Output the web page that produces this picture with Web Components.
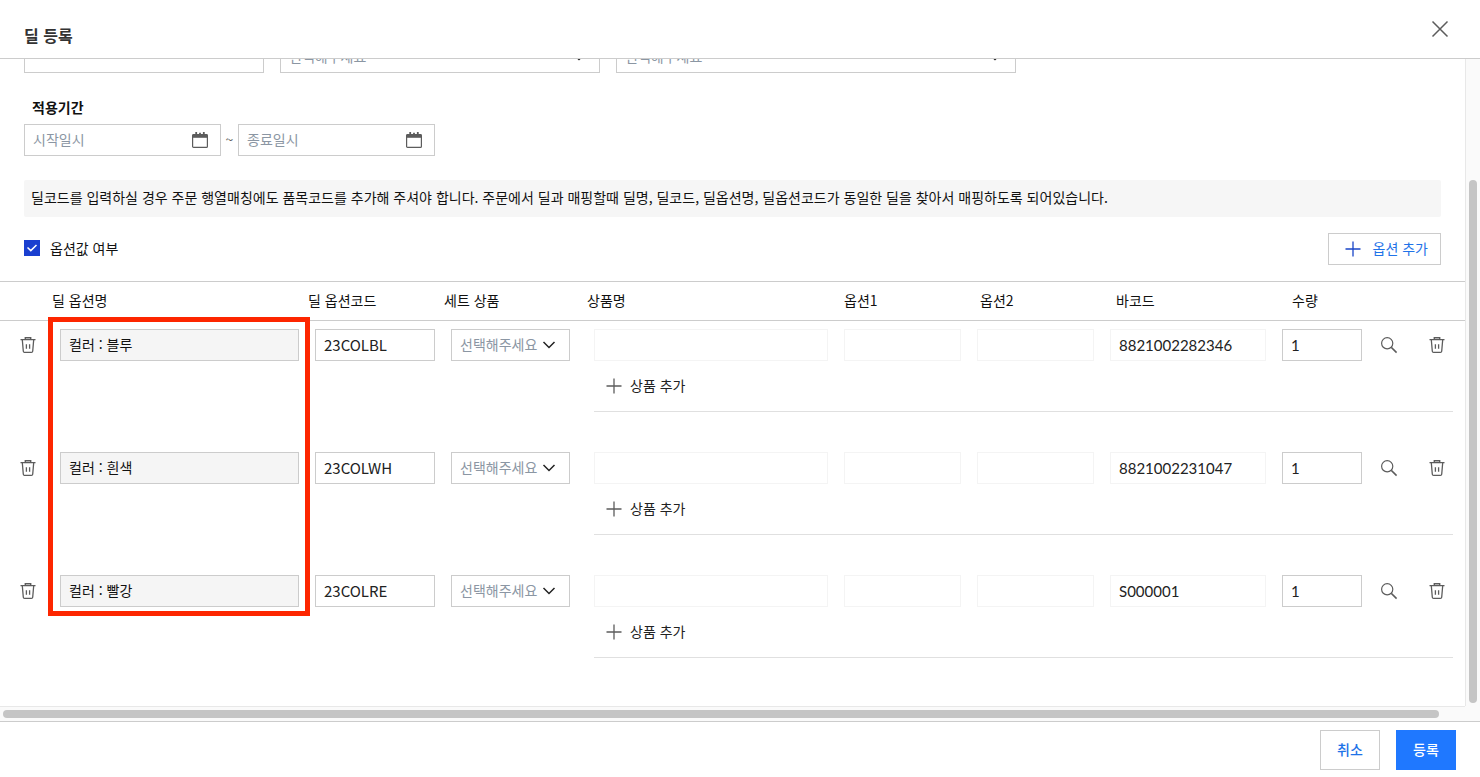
<!DOCTYPE html>
<html lang="ko">
<head>
<meta charset="utf-8">
<meta name="viewport" content="width=device-width, initial-scale=1">
<title>딜 등록</title>
<style>
    html, body {
        height: 100%;
        margin: 0;
    }
    body {
        font: 14px/20px "Noto Sans CJK KR", sans-serif;
        color: #111;
        background: #fff;
    }
</style>
</head>
<body>
<deal-dialog heading="딜 등록">
    <deal-form></deal-form>
    <deal-button slot="actions">취소</deal-button>
    <deal-button slot="actions" variant="primary">등록</deal-button>
</deal-dialog>

<script>
const ICONS = {
    close: '<path d="M0.5 0.5 15.5 15.5M15.5 0.5 0.5 15.5" stroke-width="1.5"/>',
    plus: '<path d="M8 0.5V15.5M0.5 8H15.5" stroke-width="1.3"/>',
    chevron: '<path d="M2.5 5 8 10.5 13.5 5" stroke-width="1.5"/>',
    check: '<path d="M3.5 7.5 6.8 10.6 12.5 5" stroke-width="1.5"/>',
    search: '<circle cx="6.2" cy="6.3" r="5.6" stroke-width="1.2"/><path d="M10.3 10.4 15.6 15.6" stroke-width="1.5"/>',
    trash: '<path d="M0.5 2.6H15.5M5.3 2.4V0.7H10.7V2.4" stroke-width="1.4"/><path d="M2.3 2.8 3.3 14.2Q3.4 15.4 4.6 15.4H11.4Q12.6 15.4 12.7 14.2L13.7 2.8M6.4 7.3V11.8M9.6 7.3V11.8" stroke-width="1.3"/>',
    calendar: '<rect x="0.6" y="2.6" width="14.8" height="12.8" rx="1" stroke-width="1.2"/><path d="M0.6 2.2H15.4V5.8H0.6Z" fill="currentColor" stroke="none"/><path d="M4.2 0V3M8 0.8V3M11.8 0V3" stroke-width="1.8"/>'
};

class DealIcon extends HTMLElement {
    constructor() {
        super();
        this.attachShadow({ mode: 'open' });
    }

    connectedCallback() {
        this.shadowRoot.innerHTML = `
            <style>
                :host { display: block; flex: none; width: 16px; height: 16px; }
                svg { display: block; width: 100%; height: 100%; overflow: visible; }
            </style>
            <svg viewBox="0 0 16 16" fill="none" stroke="currentColor" aria-hidden="true">
                ${ICONS[this.getAttribute('name')] || ''}
            </svg>
        `;
    }
}

class DealButton extends HTMLElement {
    constructor() {
        super();
        this.attachShadow({ mode: 'open' });
        this.shadowRoot.innerHTML = `
            <style>
                :host { display: block; }
                button {
                    height: 40px;
                    min-width: 60px;
                    padding: 0 16px 2px;
                    border: 1px solid #ccc;
                    background: #fff;
                    color: #1f73e8;
                    font: inherit;
                    font-weight: 500;
                    cursor: pointer;
                }
                :host([variant=primary]) button {
                    border-color: #1f78ff;
                    background: #1f78ff;
                    color: #fff;
                }
            </style>
            <button type="button"><slot></slot></button>
        `;
    }
}

class TextField extends HTMLElement {
    constructor() {
        super();
        this.attachShadow({ mode: 'open' });
    }

    connectedCallback() {
        this.shadowRoot.innerHTML = `
            <style>
                :host { display: block; }
                input {
                    display: block;
                    box-sizing: border-box;
                    width: 100%;
                    height: 32px;
                    padding: 0 8px 2px;
                    border: 1px solid #ccc;
                    border-radius: 0;
                    background: #fff;
                    color: #222;
                    font: inherit;
                }
                :host([kind=code]) input { font-size: 15px; }
                :host([kind=number]) input { padding-bottom: 0; font: 15px/20px Lato, sans-serif; }
                :host([kind=locked]) input { background: #f5f5f5; color: #111; }
                :host([quiet]) input { border-color: #f4f4f4; }
            </style>
            <input type="text">
        `;
        const input = this.shadowRoot.querySelector('input');
        input.value = this.getAttribute('value') || '';
        input.setAttribute('aria-label', this.getAttribute('label'));
        input.readOnly = this.hasAttribute('quiet') || this.getAttribute('kind') === 'locked';
    }
}

class SelectField extends HTMLElement {
    constructor() {
        super();
        this.attachShadow({ mode: 'open' });
    }

    connectedCallback() {
        this.shadowRoot.innerHTML = `
            <style>
                :host { display: grid; align-items: center; }
                select, deal-icon { grid-area: 1 / 1; }
                select {
                    appearance: none;
                    box-sizing: border-box;
                    width: 100%;
                    height: 32px;
                    padding: 0 28px 2px 8px;
                    border: 1px solid #ccc;
                    border-radius: 0;
                    background: #fff;
                    color: #8b96a3;
                    font: inherit;
                }
                deal-icon {
                    justify-self: end;
                    margin-right: 13px;
                    color: #222;
                    pointer-events: none;
                }
            </style>
            <select><option>선택해주세요</option></select>
            <deal-icon name="chevron"></deal-icon>
        `;
        this.shadowRoot.querySelector('select').setAttribute('aria-label', this.getAttribute('label'));
    }
}

class DateField extends HTMLElement {
    constructor() {
        super();
        this.attachShadow({ mode: 'open' });
    }

    connectedCallback() {
        const label = this.getAttribute('label');
        this.shadowRoot.innerHTML = `
            <style>
                :host {
                    display: flex;
                    align-items: center;
                    box-sizing: border-box;
                    width: 197px;
                    height: 32px;
                    padding: 0 12px 0 8px;
                    border: 1px solid #ccc;
                }
                input {
                    flex: 1;
                    min-width: 0;
                    padding: 0 0 2px;
                    border: 0;
                    outline: 0;
                    background: none;
                    font: inherit;
                }
                input::placeholder { color: #8b96a3; opacity: 1; }
                deal-icon { color: #5c5c5c; }
            </style>
            <input type="text" placeholder="${label}" aria-label="${label}">
            <deal-icon name="calendar"></deal-icon>
        `;
    }
}

class OptionTable extends HTMLElement {
    constructor() {
        super();
        this.attachShadow({ mode: 'open' });
        this.options = [
            { name: '컬러 : 블루', code: '23COLBL', barcode: '8821002282346' },
            { name: '컬러 : 흰색', code: '23COLWH', barcode: '8821002231047' },
            { name: '컬러 : 빨강', code: '23COLRE', barcode: 'S000001' }
        ];
    }

    connectedCallback() {
        this.shadowRoot.innerHTML = `
            <style>
                :host { display: block; position: relative; }
                table {
                    width: 100%;
                    table-layout: fixed;
                    border-collapse: separate;
                    border-spacing: 0;
                }
                .w-delete, .w-end { width: 52px; }
                .w-name { width: 256px; }
                .w-code { width: 136px; }
                .w-set { width: 143px; }
                .w-option { width: 133px; }
                .w-barcode { width: 172px; }
                .w-count { width: 83px; }
                .w-search { width: 48px; }
                th {
                    height: 36px;
                    padding: 0 0 2px;
                    border-top: 1px solid #ccc;
                    border-bottom: 1px solid #ccc;
                    font-weight: 400;
                    text-align: left;
                    white-space: nowrap;
                }
                th.second { padding-left: 3px; }
                th.barcode { padding-left: 6px; }
                th.count { padding-left: 10px; }
                td { padding: 8px 16px 0 0; vertical-align: top; }
                td.name { padding: 8px 9px 0 8px; }
                td.code { padding: 8px 9px 0 7px; }
                td.set { padding: 8px 17px 0 7px; }
                td.product { padding-left: 7px; }
                td.count { padding-right: 3px; }
                td.icon { padding: 8px 0 0; }
                td.more { padding: 0 12px 32px 7px; }
                .icon button {
                    display: flex;
                    align-items: center;
                    justify-content: center;
                    width: 32px;
                    height: 32px;
                    margin: 0 8px;
                    padding: 0;
                    border: 0;
                    background: none;
                    color: #5c5c5c;
                    cursor: pointer;
                }
                .icon.delete button { margin: 0 12px; }
                .line { height: 50px; border-bottom: 1px solid #e0e0e0; }
                .line button {
                    display: flex;
                    align-items: center;
                    gap: 8px;
                    height: 50px;
                    padding: 0 12px;
                    border: 0;
                    background: none;
                    color: #222;
                    font: inherit;
                    cursor: pointer;
                }
                .line span { padding-bottom: 2px; }
                .line deal-icon { color: #5c5c5c; }
                /* callout drawn over the option name column */
                .callout {
                    position: absolute;
                    box-sizing: border-box;
                    top: 36px;
                    left: 48px;
                    width: 262px;
                    height: 299px;
                    border: 5px solid #fd2600;
                    pointer-events: none;
                }
            </style>
            <table>
                <colgroup>
                    <col class="w-delete"><col class="w-name"><col class="w-code"><col class="w-set"><col>
                    <col class="w-option"><col class="w-option"><col class="w-barcode"><col class="w-count">
                    <col class="w-search"><col class="w-end">
                </colgroup>
                <thead>
                    <tr>
                        <th></th>
                        <th scope="col">딜 옵션명</th>
                        <th scope="col">딜 옵션코드</th>
                        <th scope="col">세트 상품</th>
                        <th scope="col">상품명</th>
                        <th scope="col">옵션1</th>
                        <th scope="col" class="second">옵션2</th>
                        <th scope="col" class="barcode">바코드</th>
                        <th scope="col" class="count">수량</th>
                        <th></th>
                        <th></th>
                    </tr>
                </thead>
                <tbody>${this.options.map(option => this.renderRow(option)).join('')}</tbody>
            </table>
            <div class="callout"></div>
        `;
    }

    renderRow(option) {
        return `
            <tr>
                <td class="icon delete" rowspan="2"><button type="button" aria-label="옵션 삭제"><deal-icon name="trash"></deal-icon></button></td>
                <td class="name" rowspan="2"><text-field kind="locked" label="딜 옵션명" value="${option.name}"></text-field></td>
                <td class="code" rowspan="2"><text-field kind="code" label="딜 옵션코드" value="${option.code}"></text-field></td>
                <td class="set" rowspan="2"><select-field label="세트 상품"></select-field></td>
                <td class="product"><text-field quiet label="상품명"></text-field></td>
                <td><text-field quiet label="옵션1"></text-field></td>
                <td><text-field quiet label="옵션2"></text-field></td>
                <td><text-field quiet kind="number" label="바코드" value="${option.barcode}"></text-field></td>
                <td class="count"><text-field kind="number" label="수량" value="1"></text-field></td>
                <td class="icon"><button type="button" aria-label="상품 검색"><deal-icon name="search"></deal-icon></button></td>
                <td class="icon"><button type="button" aria-label="상품 삭제"><deal-icon name="trash"></deal-icon></button></td>
            </tr>
            <tr>
                <td class="more" colspan="7">
                    <div class="line"><button type="button"><deal-icon name="plus"></deal-icon><span>상품 추가</span></button></div>
                </td>
            </tr>
        `;
    }
}

class DealForm extends HTMLElement {
    constructor() {
        super();
        this.attachShadow({ mode: 'open' });
        this.shadowRoot.innerHTML = `
            <style>
                :host { display: block; }
                .fields { padding: 0 24px; }
                /* the form is scrolled, its first row is half under the header */
                .filters { display: flex; gap: 16px; margin-top: -18px; }
                .w240 { width: 240px; }
                .w320 { width: 320px; }
                .w400 { width: 400px; }
                h2 { margin: 24px 8px 7px; font-size: 14px; line-height: 20px; font-weight: 700; }
                .period { display: flex; align-items: center; }
                .period span { width: 17px; padding-bottom: 2px; text-align: center; color: #555; }
                .notice {
                    margin: 24px 0 16px;
                    padding: 7px 7px 10px;
                    border-radius: 2px;
                    background: #f6f6f6;
                }
                .toolbar {
                    display: flex;
                    align-items: center;
                    justify-content: space-between;
                    margin-bottom: 16px;
                }
                label { display: flex; align-items: center; gap: 10px; padding-bottom: 2px; }
                .box { display: grid; }
                .box input, .box deal-icon { grid-area: 1 / 1; }
                .box input {
                    appearance: none;
                    width: 16px;
                    height: 16px;
                    margin: 0;
                    border: 1px solid #999;
                }
                .box input:checked { border-color: #1a3fd0; background: #1a3fd0; }
                .box deal-icon { color: #fff; pointer-events: none; }
                .add {
                    display: flex;
                    align-items: center;
                    gap: 12px;
                    height: 32px;
                    padding: 0 12px 0 16px;
                    border: 1px solid #ccc;
                    background: #fff;
                    color: #1f73e8;
                    font: inherit;
                    cursor: pointer;
                }
                .add span { padding-bottom: 2px; }
                .add deal-icon { color: #1a45c8; }
            </style>
            <div class="fields">
                <div class="filters">
                    <text-field class="w240" label="딜코드"></text-field>
                    <select-field class="w320" label="쇼핑몰"></select-field>
                    <select-field class="w400" label="판매처"></select-field>
                </div>
                <h2>적용기간</h2>
                <div class="period">
                    <date-field label="시작일시"></date-field>
                    <span>~</span>
                    <date-field label="종료일시"></date-field>
                </div>
                <div class="notice">딜코드를 입력하실 경우 주문 행열매칭에도 품목코드를 추가해 주셔야 합니다. 주문에서 딜과 매핑할때 딜명, 딜코드, 딜옵션명, 딜옵션코드가 동일한 딜을 찾아서 매핑하도록 되어있습니다.</div>
                <div class="toolbar">
                    <label><span class="box"><input type="checkbox" checked><deal-icon name="check"></deal-icon></span>옵션값 여부</label>
                    <button type="button" class="add"><deal-icon name="plus"></deal-icon><span>옵션 추가</span></button>
                </div>
            </div>
            <option-table></option-table>
        `;
    }
}

class ScrollRail extends HTMLElement {
    constructor() {
        super();
        this.attachShadow({ mode: 'open' });
        this.shadowRoot.innerHTML = `
            <style>
                :host { display: flex; box-sizing: border-box; background: #fafafa; }
                i { border-radius: 4px; background: #c5c5c5; }
                :host([vertical]) {
                    flex-direction: column;
                    justify-content: flex-end;
                    padding: 3px;
                    border-left: 1px solid #e8e8e8;
                }
                :host([vertical]) i { width: 8px; height: 81.6%; }
                :host(:not([vertical])) { padding: 3px; border-top: 1px solid #e8e8e8; }
                :host(:not([vertical])) i { width: 98.4%; height: 8px; }
            </style>
            <i></i>
        `;
    }
}

class DealDialog extends HTMLElement {
    constructor() {
        super();
        this.attachShadow({ mode: 'open' });
    }

    connectedCallback() {
        this.shadowRoot.innerHTML = `
            <style>
                :host { display: flex; flex-direction: column; height: 100%; }
                header {
                    display: flex;
                    align-items: center;
                    justify-content: space-between;
                    height: 58px;
                    padding: 0 28px 0 24px;
                    border-bottom: 1px solid #ccc;
                }
                h1 {
                    margin: 0;
                    padding-top: 12px;
                    font-size: 16px;
                    line-height: 24px;
                    font-weight: 700;
                    color: #333;
                }
                .close {
                    display: flex;
                    padding: 4px;
                    border: 0;
                    background: none;
                    color: #5c5c5c;
                    cursor: pointer;
                }
                main {
                    flex: 1;
                    min-height: 0;
                    display: grid;
                    grid-template: minmax(0, 1fr) 15px / minmax(0, 1fr) 15px;
                }
                .view { overflow: hidden; }
                .corner { background: #fafafa; }
                footer {
                    display: flex;
                    justify-content: flex-end;
                    gap: 16px;
                    padding: 8px 24px 7px;
                    border-top: 1px solid #ccc;
                }
            </style>
            <header>
                <h1>${this.getAttribute('heading')}</h1>
                <button type="button" class="close" aria-label="닫기"><deal-icon name="close"></deal-icon></button>
            </header>
            <main>
                <div class="view"><slot></slot></div>
                <scroll-rail vertical></scroll-rail>
                <scroll-rail></scroll-rail>
                <div class="corner"></div>
            </main>
            <footer><slot name="actions"></slot></footer>
        `;
    }
}

customElements.define('deal-icon', DealIcon);
customElements.define('deal-button', DealButton);
customElements.define('text-field', TextField);
customElements.define('select-field', SelectField);
customElements.define('date-field', DateField);
customElements.define('option-table', OptionTable);
customElements.define('deal-form', DealForm);
customElements.define('scroll-rail', ScrollRail);
customElements.define('deal-dialog', DealDialog);
</script>
</body>
</html>
